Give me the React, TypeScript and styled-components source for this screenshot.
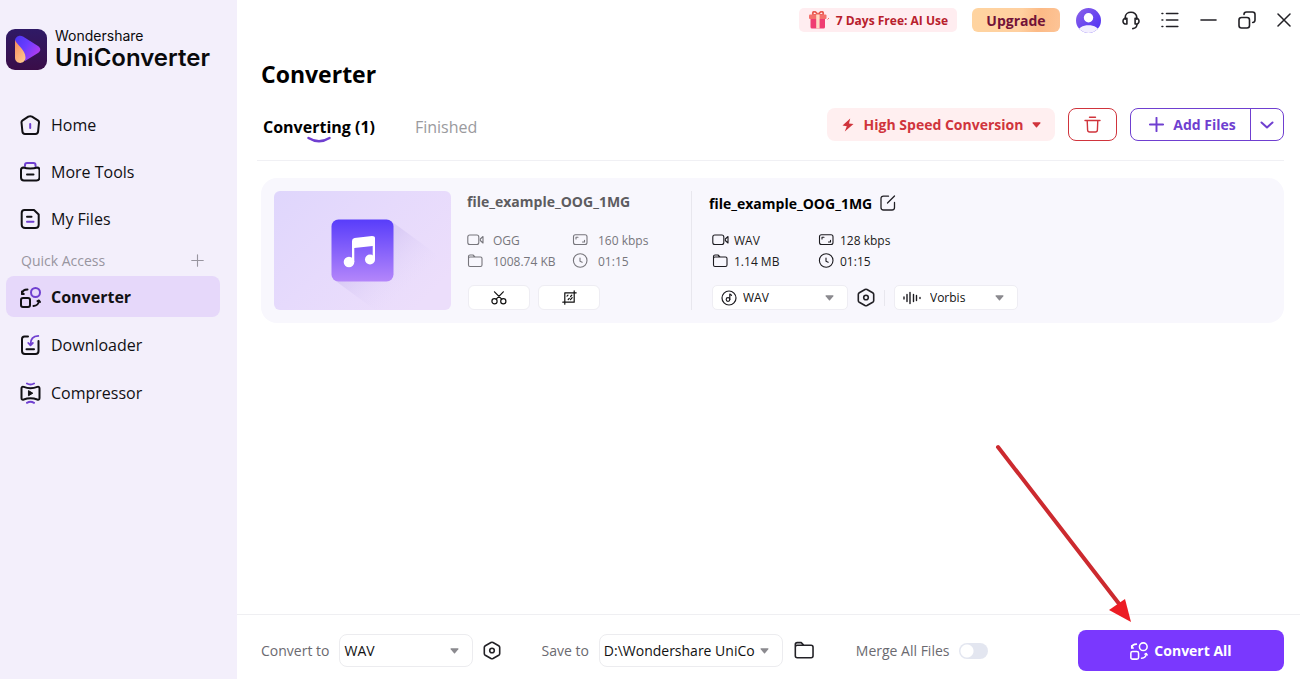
import React from "react";
import styled, { createGlobalStyle } from "styled-components";

const GlobalStyle = createGlobalStyle`
  *, *::before, *::after { box-sizing: border-box; }
  body {
    margin: 0;
    background: #ffffff;
    color: #111014;
    font-family: "Open Sans", "Noto Sans", sans-serif;
    font-size: 12px;
  }
  button, select, input { font: inherit; color: inherit; margin: 0; }
  button { padding: 0; border: 0; background: none; cursor: pointer; white-space: nowrap; }
  a { color: inherit; text-decoration: none; }
  h1, h2, ul { margin: 0; padding: 0; font-weight: inherit; }
  svg { display: block; flex: none; }
`;

const PURPLE = "#6f3fd0";
const RED = "#d0343c";

/* ---------- layout ---------- */

const Window = styled.div`
  display: grid;
  grid-template-columns: 237px minmax(0, 1fr);
  min-height: 100vh;
`;

const Sidebar = styled.aside`
  background: #f3effb;
  padding: 28px 17px 0 6px;
`;

const Brand = styled.div`
  display: flex;
  align-items: center;
  gap: 8px;
  height: 42px;
  font-family: Inter, sans-serif;
  color: #0a0a0c;
`;

const BrandText = styled.div`
  display: flex;
  flex-direction: column;
`;

const BrandSmall = styled.span`
  font-size: 14px;
  line-height: 18px;
`;

const BrandLarge = styled.span`
  font-size: 24px;
  line-height: 26px;
  font-weight: 600;
`;

const NavList = styled.ul<{ $quick?: boolean }>`
  list-style: none;
  display: flex;
  flex-direction: column;
  gap: ${(p) => (p.$quick ? "7px" : "6px")};
  margin-top: ${(p) => (p.$quick ? "0" : "34px")};
`;

const NavLink = styled.a<{ $active?: boolean }>`
  display: flex;
  align-items: center;
  gap: 10px;
  height: 41px;
  padding: 1px 0 0 14px;
  border-radius: 8px;
  font-size: 16px;
  font-weight: ${(p) => (p.$active ? 700 : 400)};
  background: ${(p) => (p.$active ? "#e6d8fa" : "transparent")};
`;

const NavIcon = styled.span`
  display: flex;
  width: 21px;
`;

const QuickHead = styled.div`
  display: flex;
  align-items: center;
  justify-content: space-between;
  height: 37px;
  padding: 5px 16px 0 15px;
  font-size: 14px;
  color: #98959f;
`;

const QuickAdd = styled.button`
  display: grid;
  place-items: center;
  color: #98959f;
`;

const Main = styled.main`
  display: flex;
  flex-direction: column;
  min-width: 0;
`;

const TopBar = styled.header`
  display: flex;
  align-items: center;
  justify-content: flex-end;
  height: 40px;
  padding-right: 9px;
`;

const PromoButton = styled.button`
  display: flex;
  align-items: center;
  gap: 6px;
  height: 24px;
  padding: 0 9px 0 10px;
  border-radius: 5px;
  background: #ffedf0;
  color: #b8202c;
  font-size: 12px;
  font-weight: 700;
`;

const UpgradeButton = styled.button`
  width: 88px;
  height: 24px;
  margin: 0 16px 0 15px;
  border-radius: 6px;
  background: linear-gradient(100deg, #ffd4a0, #ffd0a0 55%, #fcba86 75%, #fdc496);
  color: #721238;
  font-size: 14px;
  font-weight: 700;
`;

const WindowControls = styled.div`
  display: flex;
  align-items: center;
  gap: 21px;
  margin-left: 21px;
`;

const Workspace = styled.section`
  flex: 1;
  padding: 17px 16px 0 20px;
`;

const Title = styled.h1`
  padding-left: 4px;
  font-size: 23px;
  line-height: 34px;
  font-weight: 700;
  color: #000;
`;

const TabBar = styled.div`
  display: flex;
  align-items: center;
  height: 70px;
  padding: 0 0 2px 6px;
  border-bottom: 1px solid #f0f0f4;
`;

const Tab = styled.button<{ $active?: boolean }>`
  position: relative;
  padding-top: 4px;
  margin-right: 40px;
  font-size: 16px;
  line-height: 22px;
  font-weight: ${(p) => (p.$active ? 700 : 400)};
  color: ${(p) => (p.$active ? "#000" : "#9a9a9e")};
`;

const TabMark = styled.svg`
  position: absolute;
  left: 50%;
  top: 100%;
  transform: translate(-50%, -2px);
`;

const Actions = styled.div`
  display: flex;
  gap: 13px;
  height: 33px;
  margin-left: auto;
`;

const SpeedButton = styled.button`
  display: flex;
  align-items: center;
  justify-content: center;
  width: 228px;
  gap: 9px;
  border-radius: 8px;
  background: #ffeff0;
  color: ${RED};
  font-size: 14px;
  font-weight: 700;
`;

const DeleteButton = styled.button`
  display: grid;
  place-items: center;
  width: 49px;
  border: 1px solid ${RED};
  border-radius: 8px;
  color: ${RED};
`;

const SplitButton = styled.div`
  display: flex;
  border: 1px solid ${PURPLE};
  border-radius: 8px;
  color: ${PURPLE};
`;

const AddButton = styled.button`
  display: flex;
  align-items: center;
  justify-content: center;
  gap: 9px;
  width: 119px;
  padding-left: 4px;
  font-size: 14px;
  font-weight: 700;
`;

const MoreButton = styled.button`
  display: grid;
  place-items: center;
  width: 33px;
  border-left: 1px solid ${PURPLE};
`;

const FileCard = styled.article`
  display: flex;
  align-items: stretch;
  margin: 17px 0 0 4px;
  padding: 13px;
  height: 145px;
  border-radius: 16px;
  background: #f8f7fd;
`;

const Thumb = styled.div`
  width: 177px;
  flex: none;
  border-radius: 6px;
  overflow: hidden;
`;

const FileInfo = styled.div<{ $output?: boolean }>`
  display: flex;
  flex-direction: column;
  width: ${(p) => (p.$output ? "auto" : "224px")};
  margin-left: ${(p) => (p.$output ? "17px" : "16px")};
  color: ${(p) => (p.$output ? "#1c1b20" : "#77767c")};
`;

const Rule = styled.div<{ $short?: boolean }>`
  width: 1px;
  height: ${(p) => (p.$short ? "16px" : "auto")};
  background: #e8e7ee;
`;

const FileName = styled.h2<{ $output?: boolean }>`
  display: flex;
  align-items: center;
  gap: 8px;
  height: 24px;
  padding-top: ${(p) => (p.$output ? "1px" : "0")};
  padding-bottom: ${(p) => (p.$output ? "0" : "2px")};
  font-size: 14px;
  font-weight: 700;
  color: ${(p) => (p.$output ? "#000" : "#5d5c60")};
`;

const MetaGrid = styled.ul<{ $output?: boolean }>`
  list-style: none;
  display: grid;
  grid-template-columns: ${(p) => (p.$output ? "106px 106px" : "105px 105px")};
  row-gap: 1px;
  margin-top: 16px;
  padding-left: ${(p) => (p.$output ? "3px" : "0")};
`;

const Meta = styled.li<{ $output?: boolean }>`
  display: flex;
  align-items: center;
  gap: ${(p) => (p.$output ? "5px" : "9px")};
  height: 20px;
  font-size: 12px;
  white-space: nowrap;
`;

const ControlRow = styled.div<{ $output?: boolean }>`
  display: flex;
  align-items: center;
  gap: ${(p) => (p.$output ? "9px" : "8px")};
  height: 25px;
  margin-top: 14px;
  padding-left: ${(p) => (p.$output ? "3px" : "1px")};
`;

const ToolButton = styled.button`
  display: grid;
  place-items: center;
  width: 62px;
  height: 25px;
  border: 1px solid #eeedf3;
  border-radius: 6px;
  background: #fff;
  color: #111;
`;

const IconButton = styled.button`
  display: grid;
  place-items: center;
  color: #222126;
`;

const SelectBox = styled.div<{ $width: number; $large?: boolean }>`
  position: relative;
  width: ${(p) => p.$width}px;
  height: ${(p) => (p.$large ? "33px" : "25px")};
`;

const Select = styled.select<{ $large?: boolean; $inset: number }>`
  appearance: none;
  width: 100%;
  height: 100%;
  padding: 0 27px 0 ${(p) => p.$inset}px;
  border: 1px solid ${(p) => (p.$large ? "#ececef" : "#eeedf3")};
  border-radius: ${(p) => (p.$large ? "8px" : "5px")};
  background: #fff;
  font-size: ${(p) => (p.$large ? "14px" : "12px")};
  color: #111;
`;

const SelectIcon = styled.span`
  position: absolute;
  left: 9px;
  top: 50%;
  transform: translateY(-50%);
  pointer-events: none;
`;

const SelectArrow = styled.span`
  position: absolute;
  right: 14px;
  top: 50%;
  transform: translateY(-50%);
  color: #8b8a8f;
  pointer-events: none;
`;

const Footer = styled.footer`
  display: flex;
  align-items: center;
  height: 65px;
  padding: 7px 16px 0 24px;
  border-top: 1px solid #efeff2;
  font-size: 14px;
  color: #6b6a70;
`;

const Field = styled.div`
  display: flex;
  align-items: center;
  gap: 10px;
  margin-right: 40px;
`;

const FieldLabel = styled.label`
  white-space: nowrap;
`;

const Switch = styled.input`
  appearance: none;
  width: 29px;
  height: 16px;
  border-radius: 8px;
  background: radial-gradient(circle at 8px 8px, #fff 6px, #e3e6f0 7px);
`;

const ConvertArea = styled.div`
  position: relative;
  margin-left: auto;
`;

const ConvertButton = styled.button`
  display: flex;
  align-items: center;
  justify-content: center;
  gap: 6px;
  width: 206px;
  height: 41px;
  border-radius: 8px;
  background: #7a38fe;
  color: #fff;
  font-size: 14px;
  font-weight: 700;
`;

const Pointer = styled.svg`
  position: absolute;
  left: -88px;
  bottom: 100%;
  pointer-events: none;
`;

/* ---------- icons ---------- */

type IconProps = { w?: number; h?: number; box?: string; sw?: number; children: React.ReactNode };

const Icon = ({ w = 20, h = w, box = `0 0 ${w} ${h}`, sw = 2, children }: IconProps) => (
  <svg width={w} height={h} viewBox={box} fill="none" stroke="currentColor" strokeWidth={sw} strokeLinecap="round" strokeLinejoin="round" aria-hidden="true">
    {children}
  </svg>
);

const LogoIcon = () => (
  <svg width="41" height="41" viewBox="0 0 41 41" aria-hidden="true">
    <defs>
      <linearGradient id="logoBg" x1="0" y1="0" x2="0" y2="1">
        <stop offset="0" stopColor="#2f1a66" />
        <stop offset="1" stopColor="#3a0d48" />
      </linearGradient>
      <linearGradient id="logoPlay" x1="0" y1="0" x2="1" y2="0.6">
        <stop offset="0" stopColor="#4b35f0" />
        <stop offset="0.5" stopColor="#6a3cff" />
        <stop offset="1" stopColor="#b23cf0" />
      </linearGradient>
      <linearGradient id="logoDrop" x1="0" y1="0" x2="0.6" y2="1">
        <stop offset="0" stopColor="#f58a5a" />
        <stop offset="1" stopColor="#ffc48a" />
      </linearGradient>
    </defs>
    <rect width="41" height="41" rx="9" fill="url(#logoBg)" />
    <path d="M9 12C9 8 13 5.500 17 7.500L32 17C35 19 35 22 32 24L19 32Z" fill="url(#logoPlay)" />
    <path d="M9 11C11 16 19.500 21 19.500 28.500C19.500 35.500 9 36 9 28.500Z" fill="url(#logoDrop)" />
  </svg>
);

const HomeIcon = () => (
  <Icon>
    <path d="M8.300 1.700 2.600 5.400Q1.400 6.200 1.500 7.500L2.400 16.400Q2.600 18.900 5 18.900H15.500Q17.900 18.900 18.100 16.400L19 7.500Q19.100 6.200 17.900 5.400L12 1.700Q10.200.7 8.300 1.700Z" />
    <path d="M10.200 9V13" stroke={PURPLE} />
  </Icon>
);

const ToolsIcon = () => (
  <Icon>
    <path d="M5 4V3Q5 1 7 1H13.500Q15.500 1 15.500 3V4" stroke={PURPLE} />
    <path d="M1 8Q1 5.500 3.500 5.500C7 6.800 13.500 6.800 17 5.500Q19.500 5.500 19.500 8V15.500Q19.500 18.500 16.500 18.500H4Q1 18.500 1 15.500Z" />
    <path d="M7 12.500H13.500" />
  </Icon>
);

const FilesIcon = () => (
  <Icon>
    <path d="M4.500 1H14L18.700 5.500V15.500Q18.700 19 15.200 19H5.200Q1.700 19 1.700 15.500V4Q1.700 1 4.500 1Z" />
    <path d="M7 7.800H11.500" />
    <path d="M7 12.800H13.500" stroke={PURPLE} />
  </Icon>
);

const ConvertIcon = ({ size = 21, circle = PURPLE, sw = 2 }: { size?: number; circle?: string; sw?: number }) => (
  <Icon w={size} box="0 0 21 21" sw={sw}>
    <rect x="1" y="11" width="9" height="9" rx="2" />
    <circle cx="15.500" cy="5.500" r="4.500" stroke={circle} />
    <path d="M2 6.800Q2.500 2.500 7.500 2.500M13.500 19Q18.500 18.500 19 14" />
    <path d="M2 4.500V7H3.800M17.500 14.200 19 13.500 20 15" />
  </Icon>
);

const DownloadIcon = () => (
  <Icon>
    <path d="M8 1.500H4.500Q2 1.500 2 4V16Q2 19 5 19H15.500Q18.500 19 18.500 16V6" />
    <path d="M18.300.9Q10.500 1 10.500 9.500M8.300 8 10.500 10.300 12.800 8" stroke={PURPLE} strokeWidth="1.800" />
    <path d="M6.500 14.200H14" />
  </Icon>
);

const CompressIcon = () => (
  <Icon w={21} h={22}>
    <path d="M1.500 6.500Q1.500 4.200 3.700 4.900C8 6.600 13 6.600 17.300 4.900Q19.500 4.200 19.500 6.500V16Q19.500 18.200 17.300 17.500C13 15.800 8 15.800 3.700 17.500Q1.500 18.200 1.500 16Z" />
    <path d="M8.800 8.800 12.800 11.200 8.800 13.600Z" fill="currentColor" strokeWidth="1" />
    <path d="M7 1.500Q10.500 3.500 14 1.500M7 20.800Q10.500 18.800 14 20.800" stroke={PURPLE} />
  </Icon>
);

const PlusIcon = ({ size, sw }: { size: number; sw: number }) => (
  <Icon w={size} box="0 0 14 14" sw={sw}>
    <path d="M7 .8V13.200M.8 7H13.200" />
  </Icon>
);

const GiftIcon = () => (
  <svg width="21" height="18" viewBox="0 0 21 18" aria-hidden="true">
    <path d="M9 4C6-1 3 0 4 4ZM9 4C12-1 15 0 14 4Z" fill="none" stroke="#e85a50" strokeWidth="1.800" />
    <rect x="0" y="3.500" width="17.500" height="4.500" rx="1" fill="#f4716b" />
    <path d="M1.500 8H16V16Q16 17.500 14.500 17.500H3Q1.500 17.500 1.500 16Z" fill="#ef3d72" />
    <path d="M7.200 3.500H10.600V17.500H7.200Z" fill="#ffd9c4" />
    <path d="M18.500 8.500 20 7" stroke="#f4716b" />
  </svg>
);

const AvatarIcon = () => (
  <svg width="25" height="25" viewBox="0 0 25 25" aria-hidden="true">
    <defs>
      <linearGradient id="avatarBg" x1="0" y1="0" x2="1" y2="1">
        <stop offset="0" stopColor="#8c63e8" />
        <stop offset="1" stopColor="#4a2df5" />
      </linearGradient>
      <clipPath id="avatarClip"><circle cx="12.500" cy="12.500" r="12.500" /></clipPath>
    </defs>
    <g clipPath="url(#avatarClip)">
      <rect width="25" height="25" fill="url(#avatarBg)" />
      <circle cx="12.500" cy="9.800" r="4.700" fill="#fff" />
      <path d="M1 25C2 14.500 23 14.500 24 25Z" fill="#f3effe" />
    </g>
  </svg>
);

const HeadsetIcon = () => (
  <Icon w={18} h={19} sw={1.6}>
    <path d="M3.200 8.300V6.500C3.200-.5 14.800-.5 14.800 6.500V8.300" />
    <path d="M4.900 7.300C1.800 7 1 8.600 1 10.200S2 13.300 4.900 13ZM13.100 7.300C16.200 7 17 8.600 17 10.200S16 13.300 13.100 13Z" />
    <path d="M15 13.500Q14.500 17.300 10.800 17.600" />
  </Icon>
);

const ListIcon = () => (
  <Icon w={18} h={16} sw={1.6}>
    <path d="M5.500 1.500H16.800M5.500 8H16.800M5.500 14.500H16.800M1 1.500H1.800M1 8H1.800M1 14.500H1.800" />
  </Icon>
);

const MinimizeIcon = () => <Icon w={17} h={4} sw={1.6}><path d="M1 2H16" /></Icon>;

const RestoreIcon = () => (
  <Icon w={18} sw={1.6}>
    <rect x="1" y="6.500" width="10.500" height="10.500" rx="2.500" />
    <path d="M6 3.500Q6 1 8.500 1H14.500Q17 1 17 3.500V9Q17 11.300 14.700 11.500" />
  </Icon>
);

const CloseIcon = () => <Icon w={14} sw={1.5}><path d="M1 1 13 13M13 1 1 13" /></Icon>;

const BoltIcon = () => (
  <svg width="14" height="14" viewBox="0 0 14 14" fill="currentColor" aria-hidden="true">
    <path d="M9.200.5 1.500 7.500 5.800 8.300 3.800 13.500 12.500 6 8 5.500Z" />
  </svg>
);

const CaretIcon = () => (
  <svg width="9" height="6" viewBox="0 0 9 6" fill="currentColor" aria-hidden="true">
    <path d="M1 .3H8Q8.900.5 8.300 1.300L5 5.200Q4.500 5.700 4 5.200L.7 1.300Q.1.500 1 .3Z" />
  </svg>
);

const TrashIcon = () => (
  <Icon w={17} sw={1.4}>
    <path d="M5.500 1.200H11.500M1 4.500H16M3.200 4.500 3.600 14Q3.700 16 5.700 16H11.300Q13.300 16 13.400 14L13.800 4.500" />
  </Icon>
);

const ChevronIcon = () => <Icon w={14} h={8}><path d="M1.500 1.500 7 6.500 12.500 1.500" /></Icon>;

const VideoIcon = () => (
  <Icon w={17} h={16} sw={1.1}>
    <rect x=".8" y="3" width="11" height="9.500" rx="2" />
    <path d="M13.300 7 16 4.500V11L13.300 8.500Z" />
  </Icon>
);

const FolderIcon = ({ w = 17, h = 16, sw = 1.1 }: { w?: number; h?: number; sw?: number }) => (
  <Icon w={w} h={h} box="0 0 17 16" sw={sw}>
    <path d="M1.500 6V3.500Q1.500 2 3 2H6L8 4H13.500Q15 4 15 5.500V12Q15 13.500 13.500 13.500H3Q1.500 13.500 1.500 12V5.500Q1.500 4 3 4H8" />
  </Icon>
);

const BitrateIcon = () => (
  <Icon w={17} h={16} sw={1.1}>
    <rect x="1.500" y="2.700" width="13.500" height="9.800" rx="2" />
    <path d="M4 7V5.200H6M12.500 8.200V10H10.500" />
  </Icon>
);

const ClockIcon = () => (
  <Icon w={17} h={16} sw={1.1}>
    <circle cx="8.200" cy="7.500" r="6.800" />
    <path d="M8 5V8.300L10.200 9.300" />
  </Icon>
);

const ScissorsIcon = () => (
  <Icon w={16} h={14} sw={1.2}>
    <circle cx="3.500" cy="10.200" r="2.600" />
    <circle cx="12.300" cy="10.200" r="2.600" />
    <path d="M3.500.8 10.700 8.200M12.300.8 5.200 8.200" />
  </Icon>
);

const CropIcon = () => (
  <Icon w={15} sw={1.2}>
    <path d="M2.800 2.800V12.200H12.200V2.800ZM12.200.8V2.800H14.200M2.800 14.200V12.200H.8" />
    <path d="M5 6.200 6 5.200M6.200 9.500 7.300 8.300M8.500 9.700 10.200 7.600M8.600 6.500 9.800 5.200" />
  </Icon>
);

const EditIcon = () => (
  <Icon w={16} sw={1.3}>
    <path d="M8.500 1.200H3.500Q1 1.200 1 3.700V12.500Q1 15 3.500 15H12Q14.500 15 14.500 12.500V7.500M7.500 8 14.500 1" />
  </Icon>
);

const DiscIcon = () => (
  <Icon w={16} sw={1.2}>
    <circle cx="8" cy="8" r="7" />
    <circle cx="7" cy="9.500" r="1.800" />
    <path d="M8.800 9.500V4L10.500 5.300" />
  </Icon>
);

const WaveIcon = () => (
  <Icon w={18} h={16} sw={1.4}>
    <path d="M1 7V9M4 4.500V11.500M7 2.500V13.500M10.500 4.500V11.500M13.500 5.500V10.500M17 7.500V8.500" />
  </Icon>
);

const HexIcon = () => (
  <Icon w={18} h={19} sw={1.6}>
    <path d="M8 1.500 2.300 4.700Q1.300 5.300 1.300 6.500V12.500Q1.300 13.700 2.300 14.300L8 17.500Q9 18 10 17.500L15.700 14.300Q16.700 13.700 16.700 12.500V6.500Q16.700 5.300 15.700 4.700L10 1.500Q9 1 8 1.500Z" />
    <circle cx="9" cy="9.500" r="2.300" />
  </Icon>
);

const MusicArt = () => (
  <svg width="177" height="119" viewBox="0 0 177 119" preserveAspectRatio="xMidYMid slice" role="img" aria-label="Audio file">
    <defs>
      <linearGradient id="artBg" x1="0" y1="0" x2="1" y2="0.7">
        <stop offset="0" stopColor="#dfd6fc" />
        <stop offset="0.5" stopColor="#e6dafc" />
        <stop offset="1" stopColor="#ecdefb" />
      </linearGradient>
      <linearGradient id="artTile" x1="0" y1="0" x2="0" y2="1">
        <stop offset="0" stopColor="#583dfa" />
        <stop offset="1" stopColor="#b486fa" />
      </linearGradient>
      <linearGradient id="artShade" gradientUnits="userSpaceOnUse" x1="95" y1="66" x2="128" y2="102">
        <stop offset="0" stopColor="#cdbdf0" />
        <stop offset="1" stopColor="#e6d9fb" stopOpacity="0" />
      </linearGradient>
    </defs>
    <rect width="177" height="119" fill="url(#artBg)" />
    <path d="M59 88 117 30 177 74V119H101Z" fill="url(#artShade)" opacity="0.5" />
    <rect x="57.500" y="28.500" width="62" height="62" rx="7" fill="url(#artTile)" />
    <circle cx="75" cy="71" r="5.300" fill="#fff" />
    <circle cx="96" cy="68.500" r="5" fill="#fff" />
    <path d="M78 50Q78 47.500 80.500 47L98 45Q101 45 101 47V68.500H98.700V55L80.300 57V71H78Z" fill="#fff" />
  </svg>
);

/* ---------- parts ---------- */

type DropdownProps = {
  id: string;
  label?: string;
  width: number;
  inset: number;
  large?: boolean;
  icon?: React.ReactNode;
  options: string[];
};

const Dropdown = ({ id, label, width, inset, large, icon, options }: DropdownProps) => (
  <SelectBox $width={width} $large={large}>
    <Select id={id} aria-label={label} $large={large} $inset={inset}>
      {options.map((o) => <option key={o}>{o}</option>)}
    </Select>
    {icon && <SelectIcon>{icon}</SelectIcon>}
    <SelectArrow><CaretIcon /></SelectArrow>
  </SelectBox>
);

type MetaListProps = { format: string; bitrate: string; size: string; length: string; output?: boolean };

const MetaList = ({ format, bitrate, size, length, output }: MetaListProps) => (
  <MetaGrid $output={output}>
    <Meta $output={output}><VideoIcon />{format}</Meta>
    <Meta $output={output}><BitrateIcon />{bitrate}</Meta>
    <Meta $output={output}><FolderIcon />{size}</Meta>
    <Meta $output={output}><ClockIcon />{length}</Meta>
  </MetaGrid>
);

const mainNav = [
  { label: "Home", icon: <HomeIcon /> },
  { label: "More Tools", icon: <ToolsIcon /> },
  { label: "My Files", icon: <FilesIcon /> },
];

const quickNav = [
  { label: "Converter", icon: <ConvertIcon />, active: true },
  { label: "Downloader", icon: <DownloadIcon /> },
  { label: "Compressor", icon: <CompressIcon /> },
];

export default function App() {
  return (
    <>
      <GlobalStyle />
      <Window>
        <Sidebar>
          <Brand>
            <LogoIcon />
            <BrandText>
              <BrandSmall>Wondershare</BrandSmall>
              <BrandLarge>UniConverter</BrandLarge>
            </BrandText>
          </Brand>
          <nav>
            <NavList>
              {mainNav.map((n) => (
                <li key={n.label}>
                  <NavLink href="#"><NavIcon>{n.icon}</NavIcon>{n.label}</NavLink>
                </li>
              ))}
            </NavList>
            <QuickHead>
              Quick Access
              <QuickAdd aria-label="Add quick access"><PlusIcon size={13} sw={1.2} /></QuickAdd>
            </QuickHead>
            <NavList $quick>
              {quickNav.map((n) => (
                <li key={n.label}>
                  <NavLink href="#" $active={n.active}><NavIcon>{n.icon}</NavIcon>{n.label}</NavLink>
                </li>
              ))}
            </NavList>
          </nav>
        </Sidebar>

        <Main>
          <TopBar>
            <PromoButton><GiftIcon />7 Days Free: AI Use</PromoButton>
            <UpgradeButton>Upgrade</UpgradeButton>
            <IconButton aria-label="Account"><AvatarIcon /></IconButton>
            <WindowControls>
              <IconButton aria-label="Support"><HeadsetIcon /></IconButton>
              <IconButton aria-label="Menu"><ListIcon /></IconButton>
              <IconButton aria-label="Minimize"><MinimizeIcon /></IconButton>
              <IconButton aria-label="Restore"><RestoreIcon /></IconButton>
              <IconButton aria-label="Close"><CloseIcon /></IconButton>
            </WindowControls>
          </TopBar>

          <Workspace>
            <Title>Converter</Title>
            <TabBar>
              <Tab $active>
                Converting (1)
                <TabMark width="24" height="8" viewBox="0 0 24 8" fill="none" stroke={PURPLE} strokeWidth="2.500" strokeLinecap="round" aria-hidden="true">
                  <path d="M1.500 2Q12 8.500 22.500 2" />
                </TabMark>
              </Tab>
              <Tab>Finished</Tab>
              <Actions>
                <SpeedButton><BoltIcon />High Speed Conversion<CaretIcon /></SpeedButton>
                <DeleteButton aria-label="Delete"><TrashIcon /></DeleteButton>
                <SplitButton>
                  <AddButton><PlusIcon size={15} sw={1.8} />Add Files</AddButton>
                  <MoreButton aria-label="More ways to add"><ChevronIcon /></MoreButton>
                </SplitButton>
              </Actions>
            </TabBar>

            <FileCard>
              <Thumb><MusicArt /></Thumb>
              <FileInfo>
                <FileName>file_example_OOG_1MG</FileName>
                <MetaList format="OGG" bitrate="160 kbps" size="1008.74 KB" length="01:15" />
                <ControlRow>
                  <ToolButton aria-label="Trim"><ScissorsIcon /></ToolButton>
                  <ToolButton aria-label="Crop"><CropIcon /></ToolButton>
                </ControlRow>
              </FileInfo>
              <Rule />
              <FileInfo $output>
                <FileName $output>
                  file_example_OOG_1MG
                  <IconButton aria-label="Rename"><EditIcon /></IconButton>
                </FileName>
                <MetaList output format="WAV" bitrate="128 kbps" size="1.14 MB" length="01:15" />
                <ControlRow $output>
                  <Dropdown id="fileFormat" label="Output format" width={136} inset={30} icon={<DiscIcon />} options={["WAV", "MP3", "OGG"]} />
                  <IconButton aria-label="Output settings"><HexIcon /></IconButton>
                  <Rule $short />
                  <Dropdown id="encoder" label="Encoder" width={124} inset={35} icon={<WaveIcon />} options={["Vorbis", "PCM"]} />
                </ControlRow>
              </FileInfo>
            </FileCard>
          </Workspace>

          <Footer>
            <Field>
              <FieldLabel htmlFor="convertTo">Convert to</FieldLabel>
              <Dropdown id="convertTo" large width={134} inset={4} options={["WAV", "MP3", "OGG"]} />
              <IconButton aria-label="Format settings"><HexIcon /></IconButton>
            </Field>
            <Field>
              <FieldLabel htmlFor="saveTo">Save to</FieldLabel>
              <Dropdown id="saveTo" large width={184} inset={4} options={["D:\\Wondershare UniConverter 15\\Converted"]} />
              <IconButton aria-label="Open folder"><FolderIcon w={23} h={21} sw={1.2} /></IconButton>
            </Field>
            <Field>
              <FieldLabel htmlFor="merge">Merge All Files</FieldLabel>
              <Switch id="merge" type="checkbox" role="switch" />
            </Field>
            <ConvertArea>
              <ConvertButton><ConvertIcon size={18} circle="currentColor" sw={1.8} />Convert All</ConvertButton>
              <Pointer width="144" height="192" viewBox="0 0 144 192" aria-hidden="true">
                <path d="M8 9 130 167" stroke="#cc2a2f" strokeWidth="4" strokeLinecap="round" />
                <path d="M141 184 119 172 135 161Z" fill="#ec1c24" />
              </Pointer>
            </ConvertArea>
          </Footer>
        </Main>
      </Window>
    </>
  );
}
